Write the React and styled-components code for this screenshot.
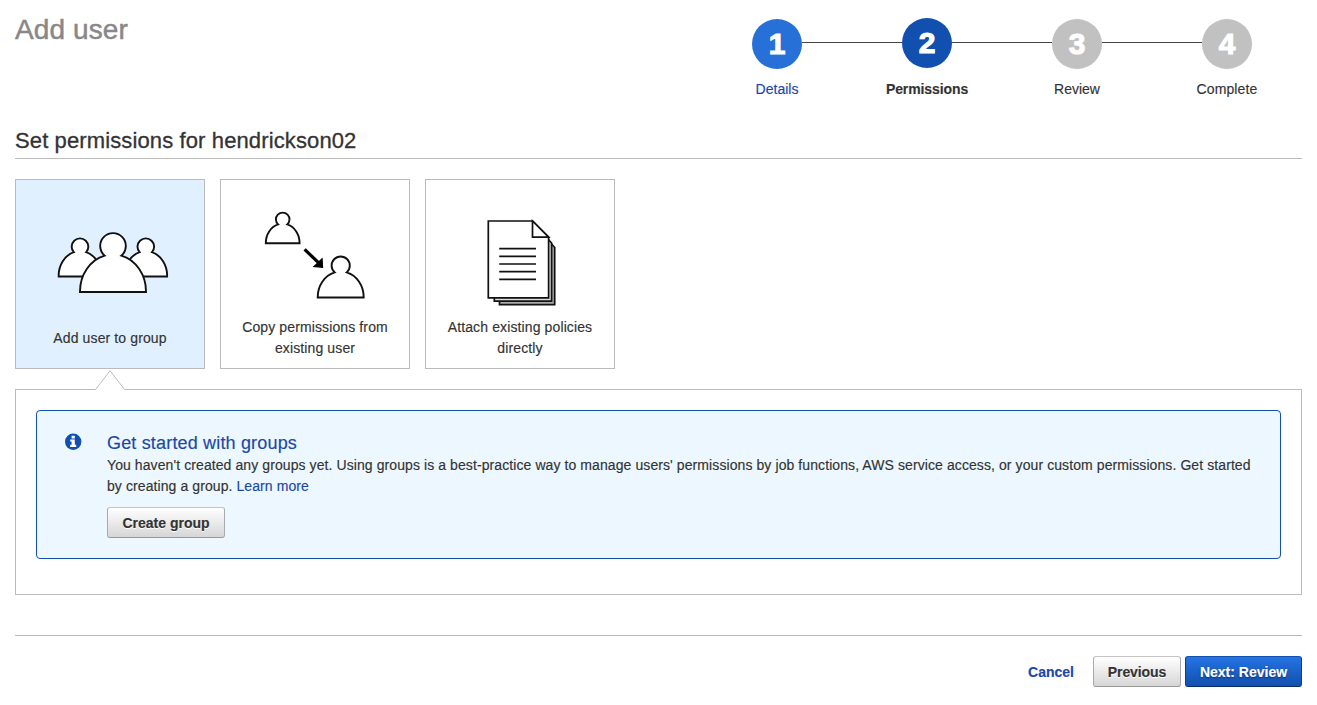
import React from "react";
import styled, { createGlobalStyle } from "styled-components";

const Global = createGlobalStyle`
  *, *::before, *::after { box-sizing: border-box; }
  body {
    margin: 0;
    background: #fff;
    color: #333;
    font-family: "Liberation Sans", Arial, sans-serif;
    font-size: 14px;
    line-height: 21px;
    -webkit-text-stroke: 0.15px currentColor;
  }
`;

const Page = styled.main`
  width: 100%;
  min-height: 705px;
  padding: 0 15px;
`;

const Header = styled.header`
  display: flex;
  justify-content: space-between;
  height: 118px;
`;

const PageTitle = styled.h1`
  margin: 12px 0 0;
  font-size: 28px;
  line-height: 36px;
  font-weight: 400;
  letter-spacing: 0.1px;
  color: #888;
  -webkit-text-stroke: 0.5px #888;
`;

const Steps = styled.ol`
  display: flex;
  margin: 0;
  padding: 18px 0 0;
  list-style: none;
`;

const Step = styled.li`
  width: 150px;
  display: flex;
  flex-direction: column;
`;

const Rail = styled.div`
  display: flex;
  align-items: flex-start;
  height: 51px;
`;

const Connector = styled.span`
  flex: 1;
  height: 1px;
  margin-top: 24px;
  background: ${(p) => (p.$hidden ? "transparent" : "#444")};
`;

const stepColors = { done: "#2670d8", current: "#1150af", todo: "#c1c1c1" };

const StepNumber = styled.span`
  width: 50px;
  height: 50px;
  margin-top: ${(p) => (p.$state === "current" ? 0 : 1)}px;
  border-radius: 50%;
  background: ${(p) => stepColors[p.$state]};
  color: #fff;
  font-size: 30px;
  line-height: 50px;
  font-weight: 700;
  text-align: center;
  -webkit-text-stroke: 1.1px #fff;
`;

const StepLabel = styled.span`
  margin-top: 10px;
  text-align: center;
  letter-spacing: ${(p) => p.$spacing || 0}px;
  font-weight: ${(p) => (p.$state === "current" ? 700 : 400)};
  color: ${(p) => (p.$state === "done" ? "#1a47a8" : "#333")};
`;

const SectionTitle = styled.h2`
  height: 41px;
  margin: 0 0 20px;
  padding-top: 9px;
  border-bottom: 1px solid #bbb;
  font-size: 22px;
  line-height: 28px;
  font-weight: 400;
  letter-spacing: 0.12px;
  -webkit-text-stroke: 0.3px #333;
`;

const Cards = styled.div`
  display: flex;
  gap: 15px;
`;

const Card = styled.button`
  width: 190px;
  height: 190px;
  padding: 0 10px;
  display: flex;
  flex-direction: column;
  align-items: center;
  border: 1px solid #bbb;
  background: ${(p) => (p.$selected ? "#e0f0ff" : "#fff")};
  color: #333;
  font: inherit;
  letter-spacing: 0.12px;
`;

const CardArt = styled.svg`
  flex: none;
  display: block;
  width: 168px;
  height: ${(p) => p.$height}px;
`;

const Panel = styled.section`
  position: relative;
  height: 206px;
  margin-top: 20px;
  padding: 20px;
  border: 1px solid #bbb;
`;

const Pointer = styled.svg`
  position: absolute;
  left: 79px;
  top: -20px;
`;

const Notice = styled.div`
  display: flex;
  height: 149px;
  padding: 21px 20px 0 28px;
  border: 1px solid #1150af;
  border-radius: 4px;
  background: #ecf7ff;
`;

const NoticeIcon = styled.svg`
  flex: none;
  width: 17px;
  height: 17px;
  margin: 1px 25px 0 0;
`;

const NoticeBody = styled.div`
  flex: 1;
`;

const NoticeTitle = styled.h3`
  margin: 0;
  font-size: 18px;
  line-height: 22px;
  font-weight: 400;
  letter-spacing: 0.17px;
  color: #1a47a8;
`;

const NoticeText = styled.p`
  margin: 1px 0 10px;
  letter-spacing: 0.088px;
`;

const Link = styled.a`
  color: #1a47a8;
  text-decoration: none;
  font-weight: ${(p) => (p.$strong ? 700 : 400)};
`;

const Button = styled.button`
  width: ${(p) => p.$width}px;
  height: 31px;
  padding: 1px 0 0;
  border: 1px solid ${(p) => (p.$primary ? "#0c3e8c" : "#aaa")};
  border-top-color: ${(p) => (p.$primary ? "#1150af" : "#c4c4c4")};
  border-bottom-color: ${(p) => (p.$primary ? "#082b63" : "#999")};
  border-radius: 3px;
  background: ${(p) =>
    p.$primary
      ? "linear-gradient(#2573e2, #1150af)"
      : "linear-gradient(#fff, #d6d6d6)"};
  color: ${(p) => (p.$primary ? "#fff" : "#333")};
  font: inherit;
  font-weight: 700;
  line-height: 28px;
  letter-spacing: ${(p) => p.$spacing || 0}px;
  text-shadow: ${(p) => (p.$primary ? "0 1px 2px #0a2c66" : "0 1px 0 #fff")};
`;

const Footer = styled.footer`
  display: flex;
  justify-content: flex-end;
  align-items: flex-start;
  margin-top: 40px;
  padding-top: 20px;
  border-top: 1px solid #bbb;
`;

const CancelSlot = styled.div`
  padding-top: 6px;
`;

const FooterButtons = styled.div`
  display: flex;
  gap: 4px;
  margin-left: 19px;
`;

/* Head-and-shoulders outline: shoulders w x h above the base line, neck half-width n, head radius r. */
function Person({ x, base, w, h, n, r, neck }) {
  const d = `M${x - w} ${base}A${w} ${h} 0 0 1 ${x - n} ${neck}A${r} ${r} 0 1 1 ${x + n} ${neck}A${w} ${h} 0 0 1 ${x + w} ${base}Z`;
  return <path d={d} fill="#fff" stroke="#111" strokeWidth="1.9" />;
}

function GroupArt() {
  return (
    <CardArt $height={148} viewBox="26 180 168 148">
      <Person x={80} base={276.5} w={21.3} h={24.3} n={6.2} r={8.3} neck={252.2} />
      <Person x={145.8} base={276.5} w={21.3} h={24.3} n={6.2} r={8.3} neck={252.2} />
      <Person x={113} base={292} w={33} h={37} n={8.3} r={12.8} neck={255.7} />
    </CardArt>
  );
}

function CopyArt() {
  return (
    <CardArt $height={137} viewBox="231 180 168 137">
      <Person x={282.7} base={243.2} w={16.9} h={19.4} n={4.6} r={6.8} neck={224.4} />
      <Person x={340.7} base={297.5} w={23} h={25.6} n={6} r={9.1} neck={272.4} />
      <path d="M304.6 249.4L318.5 262.6" stroke="#000" strokeWidth="3.2" />
      <path d="M322.6 257.4L323.2 267.9L312.6 266.9Z" fill="#000" />
    </CardArt>
  );
}

function PoliciesArt() {
  return (
    <CardArt $height={137} viewBox="436 180 168 137">
      <g stroke="#111" strokeWidth="1.7">
        <path d="M499.5 247V304.6H554.7V247.5L548 240Z" fill="#aaa" />
        <path d="M494.3 242V301.2H551.6V243L546 237Z" fill="#ddd" />
        <path d="M488.3 221H532.7L548.6 237V297.8H488.3Z" fill="#fff" />
        <path d="M532.5 221V237.2H548.6Z" fill="#fff" />
        <path d="M499.2 248.7H536M499.2 256.3H536M499.2 264H536M499.2 271.7H536M499.2 279.3H536" />
      </g>
    </CardArt>
  );
}

const steps = [
  { label: "Details", state: "done" },
  { label: "Permissions", state: "current", spacing: -0.1 },
  { label: "Review", state: "todo" },
  { label: "Complete", state: "todo", spacing: 0.14 },
];

const options = [
  { label: "Add user to group", Art: GroupArt, selected: true },
  { label: "Copy permissions from existing user", Art: CopyArt },
  { label: "Attach existing policies directly", Art: PoliciesArt },
];

export default function App() {
  return (
    <Page>
      <Global />
      <Header>
        <PageTitle>Add user</PageTitle>
        <Steps>
          {steps.map(({ label, state, spacing }, i) => (
            <Step key={label}>
              <Rail>
                <Connector $hidden={i === 0} />
                <StepNumber $state={state}>{i + 1}</StepNumber>
                <Connector $hidden={i === steps.length - 1} />
              </Rail>
              <StepLabel $state={state} $spacing={spacing}>{label}</StepLabel>
            </Step>
          ))}
        </Steps>
      </Header>

      <SectionTitle>Set permissions for hendrickson02</SectionTitle>

      <Cards>
        {options.map(({ label, Art, selected }) => (
          <Card key={label} type="button" $selected={selected}>
            <Art />
            <span>{label}</span>
          </Card>
        ))}
      </Cards>

      <Panel>
        <Pointer width="30" height="21" viewBox="0 0 30 21">
          <path d="M0.5 19.5L15 0.5L29.5 19.5V21H0.5Z" fill="#fff" />
          <path d="M0.5 19.5L15 0.7L29.5 19.5" fill="none" stroke="#bbb" />
        </Pointer>
        <Notice>
          <NoticeIcon viewBox="0 0 17 17">
            <circle cx="8.2" cy="8.7" r="8.2" fill="#1150af" />
            <path d="M6.6 2.8H9.8V5.4H6.6ZM5.2 6.6H9.8V11.8H11.2V14H5.2V11.8H6.6V8.6H5.2Z" fill="#fff" />
          </NoticeIcon>
          <NoticeBody>
            <NoticeTitle>Get started with groups</NoticeTitle>
            <NoticeText>
              You haven't created any groups yet. Using groups is a best-practice way to manage users' permissions by job functions, AWS service access, or your custom permissions. Get started by creating a group. <Link>Learn more</Link>
            </NoticeText>
            <Button type="button" $width={118}>Create group</Button>
          </NoticeBody>
        </Notice>
      </Panel>

      <Footer>
        <CancelSlot>
          <Link $strong>Cancel</Link>
        </CancelSlot>
        <FooterButtons>
          <Button type="button" $width={88} $spacing={-0.1}>Previous</Button>
          <Button type="button" $width={117} $primary>Next: Review</Button>
        </FooterButtons>
      </Footer>
    </Page>
  );
}
